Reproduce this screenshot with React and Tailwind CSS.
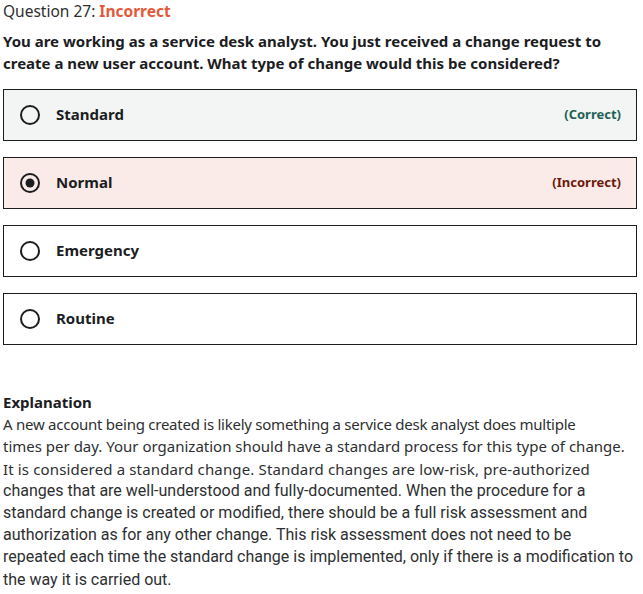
import React from "react";

function Radio({ checked }) {
  return (
    <svg width="22" height="22" viewBox="0 0 22 22" className="shrink-0">
      <circle cx="11" cy="11" r="9" fill="none" stroke="#1c1d1f" strokeWidth="2" />
      {checked && <circle cx="11" cy="11" r="4.5" fill="#1c1d1f" />}
    </svg>
  );
}

function Option({ label, state, tag }) {
  const bg =
    state === "correct" ? "bg-[#f2f5f4]" : state === "incorrect" ? "bg-[#fbebe8]" : "bg-white";
  const tagColor = state === "correct" ? "text-[#1e6055]" : "text-[#6b1a0c]";
  return (
    <div className={`ml-[3px] w-[634px] h-[52px] border border-[#1c1d1f] ${bg} flex items-center pl-[15px] pr-[15px]`}>
      <Radio checked={state === "incorrect"} />
      <span className="ml-[15px] -mt-[1px] text-[15px] font-bold text-[#1c1d1f]">{label}</span>
      {tag && <span className={`ml-auto text-[13px] font-bold ${tagColor}`}>{tag}</span>}
    </div>
  );
}

export default function App() {
  return (
    <div className="w-[643px] h-[594px] bg-white overflow-hidden text-[#1c1d1f] font-['Noto_Sans','Open_Sans',sans-serif]">
      <div className="pl-[3px] text-[15.5px] leading-[22px] text-[#2d2f31]">
        Question 27: <span className="font-bold text-[#e35a3b]">Incorrect</span>
      </div>
      <div className="pl-[3px] mt-[8px] text-[15px] font-bold leading-[22px] whitespace-nowrap">
        <div>You are working as a service desk analyst. You just received a change request to</div>
        <div>create a new user account. What type of change would this be considered?</div>
      </div>
      <div className="mt-[15px] flex flex-col gap-[16px]">
        <Option label="Standard" state="correct" tag="(Correct)" />
        <Option label="Normal" state="incorrect" tag="(Incorrect)" />
        <Option label="Emergency" />
        <Option label="Routine" />
      </div>
      <div className="pl-[3px] mt-[46px] text-[15px] leading-[22.2px] whitespace-nowrap text-[#2d2f31]">
        <div className="font-bold text-[#1c1d1f]">Explanation</div>
        <div className="tracking-[-0.25px]">A new account being created is likely something a service desk analyst does multiple</div>
        <div>times per day. Your organization should have a standard process for this type of change.</div>
        <div className="tracking-[0.15px]">It is considered a standard change. Standard changes are low-risk, pre-authorized</div>
        <div className="font-['Roboto',sans-serif] text-[16px]">
          <div>changes that are well-understood and fully-documented. When the procedure for a</div>
          <div>standard change is created or modified, there should be a full risk assessment and</div>
          <div>authorization as for any other change. This risk assessment does not need to be</div>
          <div>repeated each time the standard change is implemented, only if there is a modification to</div>
          <div>the way it is carried out.</div>
        </div>
      </div>
    </div>
  );
}
